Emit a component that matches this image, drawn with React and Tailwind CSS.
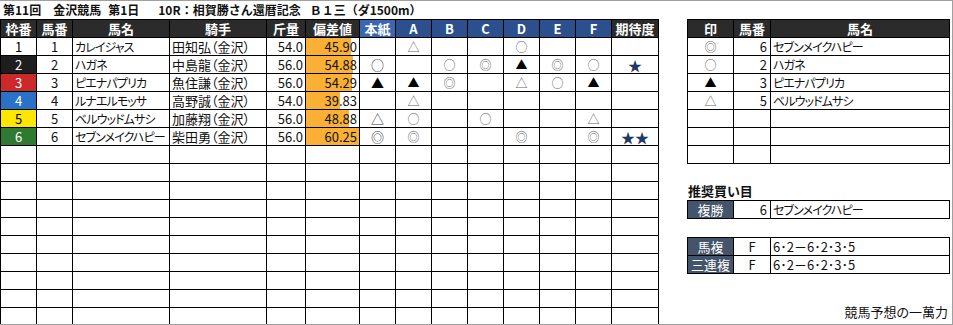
import React from 'react'

const font = { fontFamily: '"Noto Sans CJK JP", "Noto Sans", sans-serif' }

const rows = [
    { waku: 1, num: 1, name: 'カレイジャス', jockey: '田知弘（金沢）', kin: '54.0', dev: '45.90', bar: 45, marks: ['', '△', '', '', '○', '', ''], star: '' },
    { waku: 2, num: 2, name: 'ハガネ', jockey: '中島龍（金沢）', kin: '56.0', dev: '54.88', bar: 47, marks: ['○', '', '○', '◎', '▲', '◎', '○'], star: '★' },
    { waku: 3, num: 3, name: 'ピエナパプリカ', jockey: '魚住謙（金沢）', kin: '56.0', dev: '54.29', bar: 46, marks: ['▲', '▲', '◎', '', '△', '○', '▲'], star: '' },
    { waku: 4, num: 4, name: 'ルナエルモッサ', jockey: '高野誠（金沢）', kin: '54.0', dev: '39.83', bar: 34, marks: ['', '△', '', '', '', '', ''], star: '' },
    { waku: 5, num: 5, name: 'ベルウッドムサシ', jockey: '加藤翔（金沢）', kin: '56.0', dev: '48.88', bar: 43, marks: ['△', '○', '', '○', '', '', '△'], star: '' },
    { waku: 6, num: 6, name: 'セブンメイクハピー', jockey: '柴田勇（金沢）', kin: '56.0', dev: '60.25', bar: 53, marks: ['◎', '◎', '', '', '◎', '', '◎'], star: '★★' },
]

const wakuCls = {
    1: 'bg-white text-black',
    2: 'bg-[#1e1e1e] text-white',
    3: 'bg-[#cc2a2a] text-white',
    4: 'bg-[#2a72c8] text-white',
    5: 'bg-[#ffe600] text-black',
    6: 'bg-[#2f7a32] text-white',
}

const picks = [
    { mark: '◎', num: 6, name: 'セブンメイクハピー' },
    { mark: '○', num: 2, name: 'ハガネ' },
    { mark: '▲', num: 3, name: 'ピエナパプリカ' },
    { mark: '△', num: 5, name: 'ベルウッドムサシ' },
]

const td = 'border border-black p-0 h-[18px] leading-[16px] whitespace-nowrap overflow-hidden'
const th = 'border border-black p-0 h-[18px] leading-[16px] font-bold text-white text-center'
// 馬名は詰め気味
const nameCls = 'pl-[2px] text-[12px] tracking-[-0.9px]'

const Mark = ({ m, big }) => {
    if (!m) return null
    const color = m === '▲' ? 'text-black' : big ? 'text-[#333]' : 'text-[#666]'
    return <span className={`${color} ${big ? 'text-[13px]' : 'text-[12px]'} leading-[16px]`}>{m}</span>
}

const App = () => {
    const empty = Array.from({ length: 10 })
    return (
        <div className="w-[953px] h-[325px] bg-white border-t border-r border-b border-[#a0a0a0] flex overflow-hidden text-[13px] text-[#111] [font-feature-settings:'palt']" style={font}>
            {/* 出馬表 */}
            <div className="w-[658px] shrink-0">
                <div className="h-[18px] leading-[18px] pl-[3px] font-bold text-[12px] whitespace-nowrap flex [font-feature-settings:normal]">
                    <span className="mr-[12px]">第11回</span>
                    <span className="mr-[7px]">金沢競馬</span>
                    <span className="mr-[19px]">第1日</span>
                    <span className="mr-[9px]">10R：相賀勝さん還暦記念</span>
                    <span>Ｂ１三（ダ1500m）</span>
                </div>
                <table className="table-fixed border-collapse w-[658px]">
                    <colgroup>
                        <col className="w-[36px]" />
                        <col className="w-[36px]" />
                        <col className="w-[97px]" />
                        <col className="w-[97px]" />
                        <col className="w-[39px]" />
                        <col className="w-[54px]" />
                        <col className="w-[36px]" />
                        <col className="w-[36px]" />
                        <col className="w-[36px]" />
                        <col className="w-[36px]" />
                        <col className="w-[36px]" />
                        <col className="w-[36px]" />
                        <col className="w-[36px]" />
                        <col className="w-[47px]" />
                    </colgroup>
                    <thead>
                        <tr>
                            <th className={`${th} bg-[#2b2b2b]`}>枠番</th>
                            <th className={`${th} bg-[#2b2b2b]`}>馬番</th>
                            <th className={`${th} bg-[#2b2b2b]`}>馬名</th>
                            <th className={`${th} bg-[#2b2b2b]`}>騎手</th>
                            <th className={`${th} bg-[#2b2b2b]`}>斤量</th>
                            <th className={`${th} bg-[#2b2b2b]`}>偏差値</th>
                            <th className={`${th} bg-[#3b67b1]`}>本紙</th>
                            <th className={`${th} bg-[#2c4f8e]`}>A</th>
                            <th className={`${th} bg-[#2c4f8e]`}>B</th>
                            <th className={`${th} bg-[#2c4f8e]`}>C</th>
                            <th className={`${th} bg-[#2c4f8e]`}>D</th>
                            <th className={`${th} bg-[#2c4f8e]`}>E</th>
                            <th className={`${th} bg-[#2c4f8e]`}>F</th>
                            <th className={`${th} bg-[#2b2b2b]`}>期待度</th>
                        </tr>
                    </thead>
                    <tbody>
                        {rows.map(r => (
                            <tr key={r.num}>
                                <td className={`${td} text-center ${wakuCls[r.waku]}`}>{r.waku}</td>
                                <td className={`${td} text-center`}>{r.num}</td>
                                <td className={`${td} ${nameCls}`}>{r.name}</td>
                                <td className={`${td} pl-[2px]`}>{r.jockey}</td>
                                <td className={`${td} text-right pr-[2px]`}>{r.kin}</td>
                                <td className={`${td} relative text-right pr-[2px]`}>
                                    <div className="absolute left-0 top-0 bottom-0 bg-[#f9b035]" style={{ width: r.bar }} />
                                    <span className="relative">{r.dev}</span>
                                </td>
                                {r.marks.map((m, i) => (
                                    <td key={i} className={`${td} text-center`}>
                                        <Mark m={m} big={i === 0} />
                                    </td>
                                ))}
                                <td className={`${td} text-center text-[#1f3864] text-[14px]`}>{r.star}</td>
                            </tr>
                        ))}
                        {empty.map((_, i) => (
                            <tr key={'e' + i}>
                                {Array.from({ length: 14 }).map((_, j) => (
                                    <td key={j} className={td}></td>
                                ))}
                            </tr>
                        ))}
                    </tbody>
                </table>
            </div>

            {/* 予想 */}
            <div className="ml-[29px] w-[262px] shrink-0 flex flex-col">
                <table className="mt-[18px] table-fixed border-collapse w-[262px]">
                    <colgroup>
                        <col className="w-[46px]" />
                        <col className="w-[37px]" />
                        <col className="w-[179px]" />
                    </colgroup>
                    <thead>
                        <tr>
                            <th className={`${th} bg-[#2b2b2b]`}>印</th>
                            <th className={`${th} bg-[#2b2b2b]`}>馬番</th>
                            <th className={`${th} bg-[#2b2b2b]`}>馬名</th>
                        </tr>
                    </thead>
                    <tbody>
                        {picks.map(p => (
                            <tr key={p.num}>
                                <td className={`${td} text-center`}><Mark m={p.mark} /></td>
                                <td className={`${td} text-right pr-[3px]`}>{p.num}</td>
                                <td className={`${td} ${nameCls}`}>{p.name}</td>
                            </tr>
                        ))}
                        {[0, 1, 2].map(i => (
                            <tr key={i}>
                                <td className={td}></td>
                                <td className={td}></td>
                                <td className={td}></td>
                            </tr>
                        ))}
                    </tbody>
                </table>

                <div className="h-[18px] mt-[18px] leading-[18px] font-bold pl-[1px]">推奨買い目</div>
                <table className="table-fixed border-collapse w-[262px]">
                    <colgroup>
                        <col className="w-[46px]" />
                        <col className="w-[37px]" />
                        <col className="w-[179px]" />
                    </colgroup>
                    <tbody>
                        <tr>
                            <td className={`${td} text-center text-white bg-[#44546a]`}>複勝</td>
                            <td className={`${td} text-right pr-[3px]`}>6</td>
                            <td className={`${td} ${nameCls}`}>セブンメイクハピー</td>
                        </tr>
                    </tbody>
                </table>

                <table className="mt-[18px] table-fixed border-collapse w-[262px]">
                    <colgroup>
                        <col className="w-[46px]" />
                        <col className="w-[37px]" />
                        <col className="w-[179px]" />
                    </colgroup>
                    <tbody>
                        <tr>
                            <td className={`${td} text-center text-white bg-[#44546a]`}>馬複</td>
                            <td className={`${td} text-center`}>F</td>
                            <td className={`${td} pl-[2px]`}>6･2－6･2･3･5</td>
                        </tr>
                        <tr>
                            <td className={`${td} text-center text-white bg-[#44546a]`}>三連複</td>
                            <td className={`${td} text-center`}>F</td>
                            <td className={`${td} pl-[2px]`}>6･2－6･2･3･5</td>
                        </tr>
                    </tbody>
                </table>

                <div className="mt-auto mb-[3px] text-right pr-[1px] leading-[18px]">競馬予想の一萬力</div>
            </div>
        </div>
    )
}

export default App
